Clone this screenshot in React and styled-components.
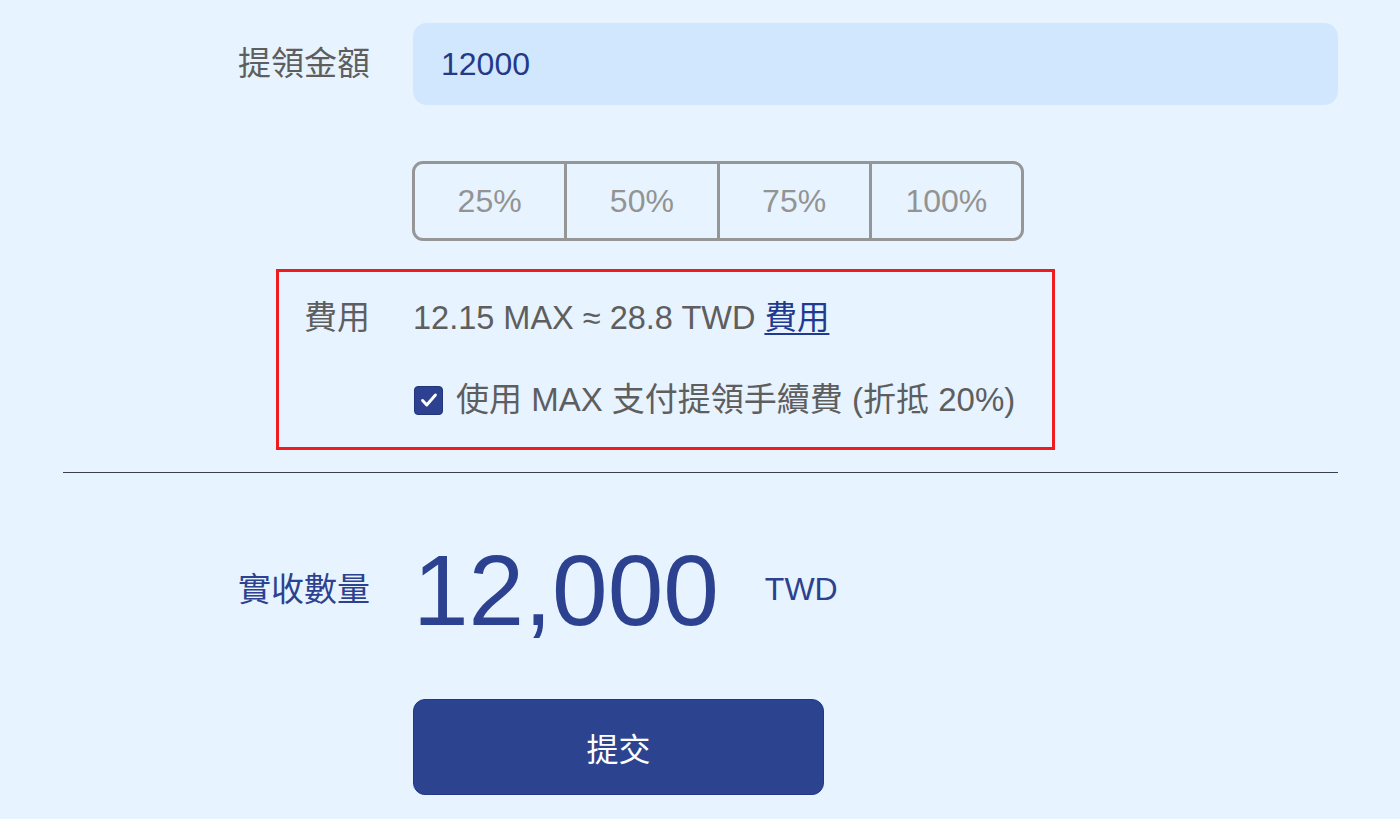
import React, { useState } from 'react';
import styled, { createGlobalStyle } from 'styled-components';

const GlobalStyle = createGlobalStyle`
  html, body {
    margin: 0;
    padding: 0;
    background: #e7f3fe;
  }
  body {
    font-family: "Liberation Sans", "Noto Sans CJK TC", sans-serif;
  }
`;

const Page = styled.div`
  width: 1275px;
  margin-left: 63px;
  padding-top: 23px;
  box-sizing: border-box;
  min-height: 819px;
`;

const Row = styled.div`
  display: grid;
  grid-template-columns: ${p => p.labelWidth || 307}px 1fr;
  column-gap: 43px;
  align-items: center;
`;

const Label = styled.div`
  text-align: right;
  font-size: 33px;
  line-height: 40px;
  color: ${p => (p.accent ? '#2c4190' : '#5e5e5e')};
`;

const AmountInput = styled.input`
  height: 82px;
  box-sizing: border-box;
  border: none;
  border-radius: 14px;
  background: #d1e7fd;
  padding: 0 28px;
  font-family: inherit;
  font-size: 32px;
  color: #24398a;
  outline: none;
`;

const PercentGroup = styled.div`
  display: flex;
  width: 612px;
  height: 80px;
  box-sizing: border-box;
  margin-top: 56px;
  margin-left: -1px;
  border: 3px solid #969696;
  border-radius: 11px;
  overflow: hidden;
`;

const PercentButton = styled.button`
  flex: 1;
  border: none;
  border-left: ${p => (p.first ? 'none' : '3px solid #969696')};
  background: transparent;
  font-family: inherit;
  font-size: 32px;
  color: #939393;
  cursor: pointer;
`;

const FeeBox = styled.div`
  margin-top: 28px;
  margin-left: 213px;
  width: 779px;
  height: 181px;
  box-sizing: border-box;
  border: 3px solid #ee1c1c;
  padding-top: 26px;
  display: flex;
  flex-direction: column;
  gap: 42px;
`;

const FeeText = styled.div`
  font-size: 32.5px;
  line-height: 40px;
  color: #5e5e5e;
  white-space: nowrap;
`;

const FeeLink = styled.a`
  color: #1f3a8f;
  text-decoration: underline;
  text-underline-offset: 4px;
  text-decoration-thickness: 2px;
  cursor: pointer;
`;

const CheckLine = styled.label`
  display: flex;
  align-items: center;
  gap: 13px;
  font-size: 33px;
  line-height: 40px;
  color: #5e5e5e;
  white-space: nowrap;
  cursor: pointer;
`;

const CheckBox = styled.span`
  width: 29px;
  height: 29px;
  flex: none;
  box-sizing: border-box;
  border-radius: 4px;
  background: ${p => (p.checked ? '#2c4190' : '#fff')};
  border: 1px solid #23357a;
  display: flex;
  align-items: center;
  justify-content: center;
  margin-left: 1px;
`;

const Divider = styled.hr`
  margin: 22px 0 0;
  border: none;
  border-top: 1px solid #3b3f4c;
`;

const ReceivedRow = styled(Row)`
  margin-top: 67px;
`;

const AmountWrap = styled.div`
  display: flex;
  align-items: flex-start;
  gap: 46px;
  color: #2c4190;
`;

const BigAmount = styled.span`
  font-size: 100px;
  line-height: 100px;
`;

const Currency = styled.span`
  font-size: 32px;
  line-height: 40px;
  margin-top: 29px;
`;

const SubmitButton = styled.button`
  margin-top: 59px;
  margin-left: 350px;
  width: 411px;
  height: 96px;
  border: 1px solid #22378a;
  border-radius: 12px;
  background: #2c4490;
  color: #fff;
  font-family: inherit;
  font-size: 32px;
  cursor: pointer;
`;

export default function App() {
  const [amount, setAmount] = useState('12000');
  const [useMax, setUseMax] = useState(true);
  const percents = ['25%', '50%', '75%', '100%'];

  return (
    <>
      <GlobalStyle />
      <Page>
        <Row>
          <Label>提領金額</Label>
          <AmountInput value={amount} onChange={e => setAmount(e.target.value)} />
        </Row>
        <Row>
          <div />
          <PercentGroup>
            {percents.map((p, i) => (
              <PercentButton key={p} first={i === 0}>{p}</PercentButton>
            ))}
          </PercentGroup>
        </Row>
        <FeeBox>
          <Row labelWidth={91}>
            <Label>費用</Label>
            <FeeText>
              12.15 MAX ≈ 28.8 TWD <FeeLink>費用</FeeLink>
            </FeeText>
          </Row>
          <Row labelWidth={91}>
            <div />
            <CheckLine onClick={() => setUseMax(!useMax)}>
              <CheckBox checked={useMax}>
                {useMax && (
                  <svg width="22" height="22" viewBox="0 0 24 24" fill="none" stroke="#fff" strokeWidth="3.2" strokeLinecap="round" strokeLinejoin="round">
                    <path d="M5 12.5l4.5 5L19 6.5" />
                  </svg>
                )}
              </CheckBox>
              使用 MAX 支付提領手續費 (折抵 20%)
            </CheckLine>
          </Row>
        </FeeBox>
        <Divider />
        <ReceivedRow>
          <Label accent>實收數量</Label>
          <AmountWrap>
            <BigAmount>12,000</BigAmount>
            <Currency>TWD</Currency>
          </AmountWrap>
        </ReceivedRow>
        <SubmitButton>提交</SubmitButton>
      </Page>
    </>
  );
}
